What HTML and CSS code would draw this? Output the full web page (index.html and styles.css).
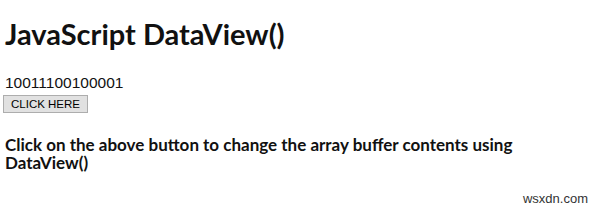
FILE: index.html
```html
<!DOCTYPE html>
<html lang="en">
<head>
    <meta charset="UTF-8">
    <title>JavaScript DataView()</title>
    <link rel="stylesheet" href="styles.css">
</head>
<body>
    <h1 class="title">JavaScript DataView()</h1>
    <div class="result">10011100100001</div>
    <button class="btn">CLICK HERE</button>
    <h3 class="sample">Click on the above button to change the array buffer contents using DataView()</h3>
    <div class="mark">wsxdn.com</div>
</body>
</html>
```

FILE: styles.css
```css
body {
    margin: 0;
    padding: 0 5px;
    font-family: 'Lato', sans-serif;
    color: #111;
    background: #fff;
    position: relative;
    height: 211px;
    overflow: hidden;
}
.title {
    margin: 17px 0 0;
    font-size: 29px;
    font-weight: bold;
    line-height: 34px;
}
.result {
    margin-top: 23px;
    font-family: 'Liberation Sans', Arial, sans-serif;
    font-size: 15.5px;
    line-height: 18px;
}
.btn {
    font-family: 'Liberation Sans', Arial, sans-serif;
    font-size: 11.5px;
    line-height: 14px;
    padding: 1px 7px;
    margin: 0 0 0 -2px;
    border: 1px solid #adadad;
    background: #e1e1e1;
    color: #000;
}
.sample {
    margin: 23px 0 0;
    font-size: 17px;
    font-weight: bold;
    line-height: 18px;
    width: 560px;
}
.mark {
    position: absolute;
    right: 12px;
    bottom: 5px;
    font-family: 'Liberation Sans', Arial, sans-serif;
    font-size: 13px;
    color: #333;
}
```
